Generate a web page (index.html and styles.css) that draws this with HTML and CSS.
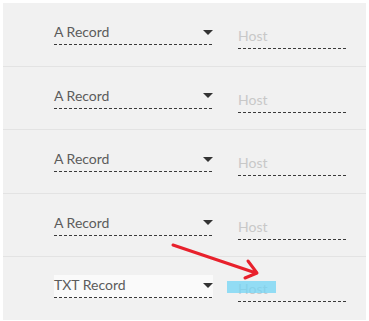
FILE: index.html
```html
<!DOCTYPE html>
<html>
<head>
<meta charset="utf-8">
<link rel="stylesheet" href="styles.css">
</head>
<body>
<div class="panel">
  <div class="row">
    <div class="select"><span class="val">A Record</span><span class="caret"></span></div>
    <div class="host"><span class="ph">Host</span></div>
  </div>
  <div class="row">
    <div class="select"><span class="val">A Record</span><span class="caret"></span></div>
    <div class="host"><span class="ph">Host</span></div>
  </div>
  <div class="row">
    <div class="select"><span class="val">A Record</span><span class="caret"></span></div>
    <div class="host"><span class="ph">Host</span></div>
  </div>
  <div class="row">
    <div class="select"><span class="val">A Record</span><span class="caret"></span></div>
    <div class="host"><span class="ph">Host</span></div>
  </div>
  <div class="row last">
    <div class="select focused"><span class="val">TXT Record</span><span class="caret"></span></div>
    <div class="host"><span class="ph">Host</span><span class="hl"></span></div>
  </div>
  <svg class="arrow" width="369" height="321" viewBox="0 0 369 321">
    <path d="M173 245 L256 273 M248 261 L257 273 L245 278" fill="none" stroke="#e8212c" stroke-width="3" stroke-linecap="round" stroke-linejoin="round"/>
  </svg>
</div>
</body>
</html>
```
FILE: styles.css
```css
html, body {
  margin: 0;
  padding: 0;
  background: #ffffff;
}
body {
  padding: 3px 3px 1px 3px;
  font-family: Lato, "Open Sans", sans-serif;
}
.panel {
  position: relative;
  background: #f1f1f1;
  height: 317px;
  box-sizing: border-box;
}
.row {
  display: flex;
  align-items: flex-start;
  height: 63.5px;
  box-sizing: border-box;
  padding: 19px 0 0 51px;
  border-bottom: 1px solid #e3e3e3;
}
.row.last {
  border-bottom: none;
  padding-top: 18px;
}
.select {
  width: 159px;
  height: 23px;
  box-sizing: border-box;
  display: flex;
  align-items: center;
  justify-content: space-between;
  background-image: repeating-linear-gradient(to right, #3a3a3a 0 3px, transparent 3px 5px);
  background-repeat: no-repeat;
  background-size: 100% 1px;
  background-position: left bottom;
  padding-bottom: 3px;
}
.select.focused {
  background-color: #fafafa;
}
.val {
  font-size: 14px;
  color: #5c5c5c;
  line-height: 16px;
}
.caret {
  width: 0;
  height: 0;
  border-left: 5px solid transparent;
  border-right: 5px solid transparent;
  border-top: 5px solid #333333;
  margin-right: 0;
}
.host {
  position: relative;
  width: 108px;
  height: 27px;
  margin-left: 25px;
  box-sizing: border-box;
  padding-top: 6px;
  background-image: repeating-linear-gradient(to right, #3a3a3a 0 3px, transparent 3px 5px);
  background-repeat: no-repeat;
  background-size: 100% 1px;
  background-position: left bottom;
}
.ph {
  font-size: 14px;
  line-height: 16px;
  color: #c8c8c8;
  display: block;
}
.hl {
  position: absolute;
  left: -11px;
  top: 6px;
  width: 49px;
  height: 12px;
  background: rgba(110, 212, 245, 0.72);
}
.arrow {
  position: absolute;
  left: -3px;
  top: -3px;
  pointer-events: none;
}
```
